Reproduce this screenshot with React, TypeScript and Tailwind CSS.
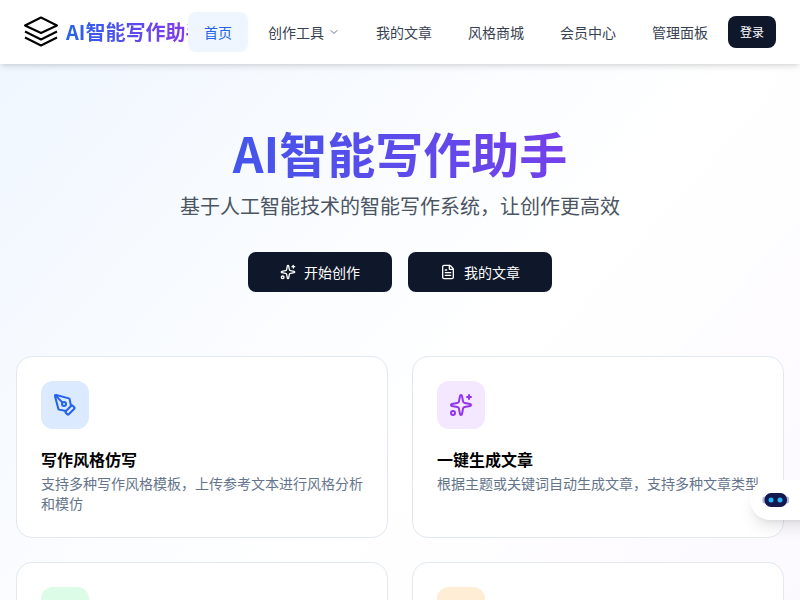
import { ChevronDown, FileText, PenTool, Sparkles, Wand2, Palette } from "lucide-react";

const NAV_CLS = "flex items-center gap-1 h-10 px-4 rounded-lg text-sm whitespace-nowrap";
const GRAD_TEXT_CLS = "font-bold whitespace-nowrap bg-linear-to-r/srgb from-[#2563eb] to-[#9333ea] bg-clip-text text-transparent";

const CARDS = [
  {
    title: "写作风格仿写",
    desc: "支持多种写作风格模板，上传参考文本进行风格分析和模仿",
    box: "bg-[#dbeafe]",
    icon: <PenTool size={24} className="text-[#2563eb]" />,
  },
  {
    title: "一键生成文章",
    desc: "根据主题或关键词自动生成文章，支持多种文章类型",
    box: "bg-[#f3e8ff]",
    icon: <Sparkles size={24} className="text-[#9333ea]" />,
  },
  {
    title: "智能内容优化",
    desc: "自动检查语法和逻辑，提供专业的内容优化建议",
    box: "bg-[#dcfce7]",
    icon: <Wand2 size={24} className="text-[#16a34a]" />,
  },
  {
    title: "丰富风格商城",
    desc: "海量写作风格可供选择，满足不同场景的创作需求",
    box: "bg-[#ffedd5]",
    icon: <Palette size={24} className="text-[#ea580c]" />,
  },
];

function Logo() {
  return (
    <svg width="34" height="32" viewBox="0 0 34 32" fill="none" stroke="#000" strokeWidth="2" strokeLinejoin="round" className="shrink-0">
      <path d="M17 1.5 33 9.5 17 17 1 9.5Z" />
      <path d="M1 15.5 17 23.5 33 15.5" />
      <path d="M1 21.5 17 29.5 33 21.5" />
    </svg>
  );
}

function Robot() {
  return (
    <svg width="28" height="20" viewBox="0 0 28 20">
      <rect x="0.5" y="6.5" width="4" height="7" rx="2" fill="#a9b8e4" />
      <rect x="23" y="6.5" width="4" height="7" rx="2" fill="#a9b8e4" />
      <rect x="2.5" y="3" width="22.5" height="14" rx="6.5" fill="#15174f" />
      <circle cx="9" cy="10" r="2.5" fill="#22b8f5" />
      <circle cx="18" cy="10" r="2.5" fill="#22b8f5" />
    </svg>
  );
}

export default function App() {
  return (
    <div className="relative h-screen overflow-hidden" style={{ fontFamily: '"Noto Sans CJK SC", sans-serif' }}>
      <div className="min-h-[900px] bg-linear-to-br/srgb from-[#eff6ff] via-white to-[#faf5ff] text-gray-900">
        {/* Nav */}
        <nav className="relative z-10 h-16 bg-white shadow-md flex items-center justify-between px-6">
          <div className="flex items-center gap-2 w-[164px] shrink-0">
            <Logo />
            <span className={`text-xl ${GRAD_TEXT_CLS}`}>AI智能写作助手</span>
          </div>
          <div className="relative flex items-center gap-1 bg-white">
            <a className={`${NAV_CLS} bg-[#eff6ff] text-[#2563eb]`}>首页</a>
            <a className={`${NAV_CLS} text-[#374151]`}>
              创作工具
              <ChevronDown size={12} className="text-gray-500" />
            </a>
            <a className={`${NAV_CLS} text-[#374151]`}>我的文章</a>
            <a className={`${NAV_CLS} text-[#374151]`}>风格商城</a>
            <a className={`${NAV_CLS} text-[#374151]`}>会员中心</a>
            <a className={`${NAV_CLS} text-[#374151]`}>管理面板</a>
            <button className="h-8 px-3 rounded-lg bg-[#0f172a] text-white text-xs">登录</button>
          </div>
        </nav>

        {/* Hero */}
        <section className="pt-[54px] px-4 flex flex-col items-center">
          <h1 className={`w-full text-center text-5xl leading-[68px] ${GRAD_TEXT_CLS}`}>AI智能写作助手</h1>
          <p className="mt-[6px] text-xl leading-7 text-[#4b5563]">基于人工智能技术的智能写作系统，让创作更高效</p>
          <div className="mt-8 flex gap-4">
            <button className="w-36 h-10 rounded-lg bg-[#0f172a] text-white text-sm flex items-center justify-center gap-2">
              <Sparkles size={16} />
              开始创作
            </button>
            <button className="w-36 h-10 rounded-lg bg-[#0f172a] text-white text-sm flex items-center justify-center gap-2">
              <FileText size={16} />
              我的文章
            </button>
          </div>
        </section>

        {/* Feature cards */}
        <section className="mt-16 px-4 pb-14 grid grid-cols-2 gap-6">
          {CARDS.map((c) => (
            <div key={c.title} className="h-[182px] rounded-2xl border border-[#e2e8f0] bg-white p-6">
              <div className={`w-12 h-12 rounded-xl flex items-center justify-center ${c.box}`}>{c.icon}</div>
              <h3 className="mt-4 text-base font-bold leading-7 text-black">{c.title}</h3>
              <p className="text-sm leading-5 text-[#64748b]">{c.desc}</p>
            </div>
          ))}
        </section>
      </div>

      {/* Floating assistant */}
      <div className="absolute left-[750px] top-[480px] z-20 w-[70px] h-10 pl-3 flex items-center rounded-l-full bg-white shadow-lg">
        <Robot />
      </div>
    </div>
  );
}
